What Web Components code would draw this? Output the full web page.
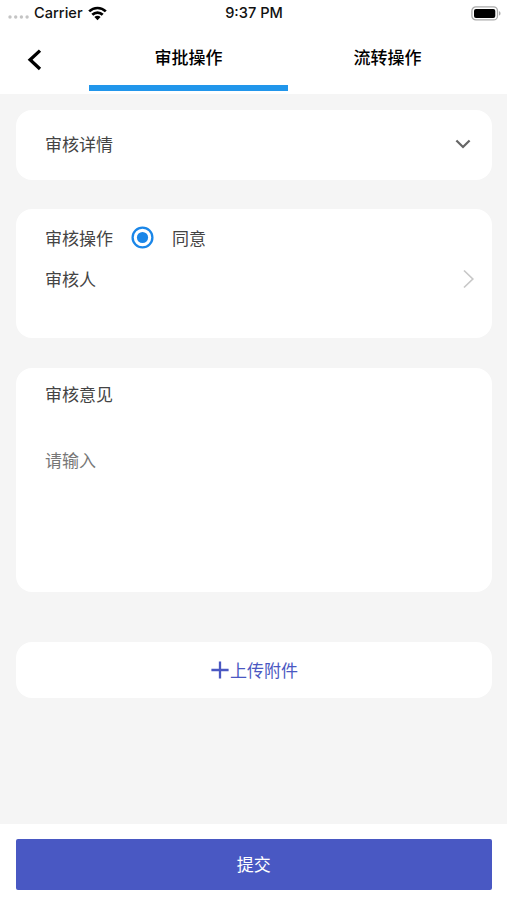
<!DOCTYPE html>
<html lang="zh-CN">
<head>
<meta charset="utf-8">
<meta name="viewport" content="width=device-width, initial-scale=1">
<title>审批操作</title>
<style>
html, body { margin: 0; height: 100%; }
body { font: 17px/24px "Noto Sans CJK SC", sans-serif; color: #444; background: #f5f5f5; overflow: hidden; }
</style>
</head>
<body>
<approval-page></approval-page>
<script>
const define = (name, html) => customElements.define(name, class extends HTMLElement {
  constructor() {
    super();
    const t = document.createElement('template');
    t.innerHTML = html;
    this.attachShadow({ mode: 'open' }).append(t.content.cloneNode(true));
  }
});

define('status-bar', `
<style>
:host { display: grid; grid-template-columns: 1fr auto 1fr; align-items: center; height: 26px; box-sizing: border-box; padding: 0 7px 0 8px;
  font: 500 14.6px/26px Inter, "Liberation Sans", sans-serif; color: #111; }
.left { display: flex; align-items: center; }
.dots { margin: 8px 5px 0 0; }
.wifi { margin-left: 5px; }
.battery { justify-self: end; margin-right: -1px; }
svg { display: block; }
</style>
<div class="left">
  <svg class="dots" width="21" height="4" viewBox="0 0 21 4" fill="#c4c4c4"><circle cx="2" cy="2" r="1.7"/><circle cx="7.7" cy="2" r="1.7"/><circle cx="13.4" cy="2" r="1.7"/><circle cx="19.1" cy="2" r="1.7"/></svg>
  <span>Carrier</span>
  <svg class="wifi" width="19" height="15" viewBox="0 0 19 15"><g fill="none" stroke="#000" stroke-width="2.7"><path d="M1.2 5.4a11.8 11.8 0 0 1 16.6 0"/><path d="M4.3 8.7a7.4 7.4 0 0 1 10.4 0"/></g><path d="M6.4 11.1a4.4 4.4 0 0 1 6.2 0L9.5 14.3z"/></svg>
</div>
<span>9:37 PM</span>
<svg class="battery" width="30" height="15" viewBox="0 0 30 15"><rect x=".9" y=".9" width="25.6" height="13" rx="4" fill="#fff" stroke="#aaa" stroke-width="1.3"/><rect x="3" y="3" width="21.3" height="9" rx="2" fill="#000"/><path d="M28 5.2c2 .6 2 3.8 0 4.4z" fill="#aaa"/></svg>
`);

define('tab-item', `
<style>
:host { display: flex; flex: 1; flex-direction: column; align-items: center; box-sizing: border-box; color: #000; font-weight: 500; border-bottom: 6px solid transparent; }
:host([active]) { border-color: #2196eb; }
</style>
<slot></slot>
`);

define('nav-bar', `
<style>
:host { display: flex; height: 68px; box-sizing: border-box; padding: 19px 20px 0 0; }
.back { width: 89px; flex: none; }
svg { display: block; margin: 4px 0 0 27px; }
.tabs { display: flex; flex: 1; margin-bottom: 3.5px; }
</style>
<div class="back"><svg width="16" height="22" viewBox="0 0 16 22" fill="none" stroke="#000" stroke-width="3.3"><path d="M13 1.6L3.1 10.8L13 20"/></svg></div>
<div class="tabs"><slot></slot></div>
`);

define('form-card', `
<style>
:host { display: block; box-sizing: border-box; background: #fff; border-radius: 16px; padding: 0 17px 0 29px; }
</style>
<slot></slot>
`);

define('form-row', `
<style>
:host { display: flex; align-items: center; height: 42px; }
.end { margin-left: auto; display: flex; }
</style>
<slot></slot><span class="end"><slot name="end"></slot></span>
`);

define('radio-option', `
<style>
:host { display: flex; align-items: center; gap: 18px; margin-left: 18px; }
svg { display: block; }
</style>
<svg width="23" height="23" viewBox="0 0 23 23"><circle cx="11.5" cy="11.5" r="9.9" fill="none" stroke="#1a86e8" stroke-width="2.3"/><circle cx="11.5" cy="11.5" r="5.6" fill="#1a86e8"/></svg>
<slot></slot>
`);

define('text-field', `
<style>
:host { display: block; color: #777; }
</style>
<slot></slot>
`);

define('upload-button', `
<style>
:host { display: flex; align-items: center; justify-content: center; height: 100%; color: #4a58c2; }
svg { display: block; margin-right: 1px; }
</style>
<svg width="18" height="18" viewBox="0 0 18 18" fill="none" stroke="#4a58c2" stroke-width="2.3"><path d="M9 .4V17.6M.4 9H17.6"/></svg>
<slot></slot>
`);

define('submit-bar', `
<style>
:host { display: block; height: 76px; box-sizing: border-box; padding: 15px 15px 10px 15.5px; background: #fff; }
button { display: block; width: 100%; height: 51px; padding: 0 0 1px; border: 0; border-radius: 2px; background: #4958c3; color: #fff; font: inherit; }
</style>
<button><slot></slot></button>
`);

define('approval-page', `
<style>
:host { display: flex; flex-direction: column; height: 900px; }
header { background: #fff; }
main { flex: 1; padding: 15.5px 15px 0 16px; }
.detail { height: 70px; padding-top: 13px; margin-bottom: 29.5px; }
.action { height: 128.5px; padding-top: 8px; margin-bottom: 30.5px; }
.action form-row { height: 41px; }
.opinion { height: 224px; padding-top: 5px; margin-bottom: 49.5px; }
.opinion text-field { margin-top: 33px; }
.upload { height: 56.5px; padding: 0 0 0 1px; }
svg { display: block; }
.down { margin-right: 4px; }
</style>
<header>
  <status-bar></status-bar>
  <nav-bar><tab-item active>审批操作</tab-item><tab-item>流转操作</tab-item></nav-bar>
</header>
<main>
  <form-card class="detail"><form-row>审核详情<svg slot="end" class="down" width="16" height="10" viewBox="0 0 16 10" fill="none" stroke="#666" stroke-width="2.3"><path d="M1.4 1.5L8 8L14.6 1.5"/></svg></form-row></form-card>
  <form-card class="action">
    <form-row>审核操作<radio-option>同意</radio-option></form-row>
    <form-row>审核人<svg slot="end" width="13" height="20" viewBox="0 0 13 20" fill="none" stroke="#c8c8c8" stroke-width="1.7"><path d="M2 1.5L10.8 10L2 18.5"/></svg></form-row>
  </form-card>
  <form-card class="opinion">
    <form-row>审核意见</form-row>
    <text-field>请输入</text-field>
  </form-card>
  <form-card class="upload"><upload-button>上传附件</upload-button></form-card>
</main>
<submit-bar>提交</submit-bar>
`);
</script>
</body>
</html>
